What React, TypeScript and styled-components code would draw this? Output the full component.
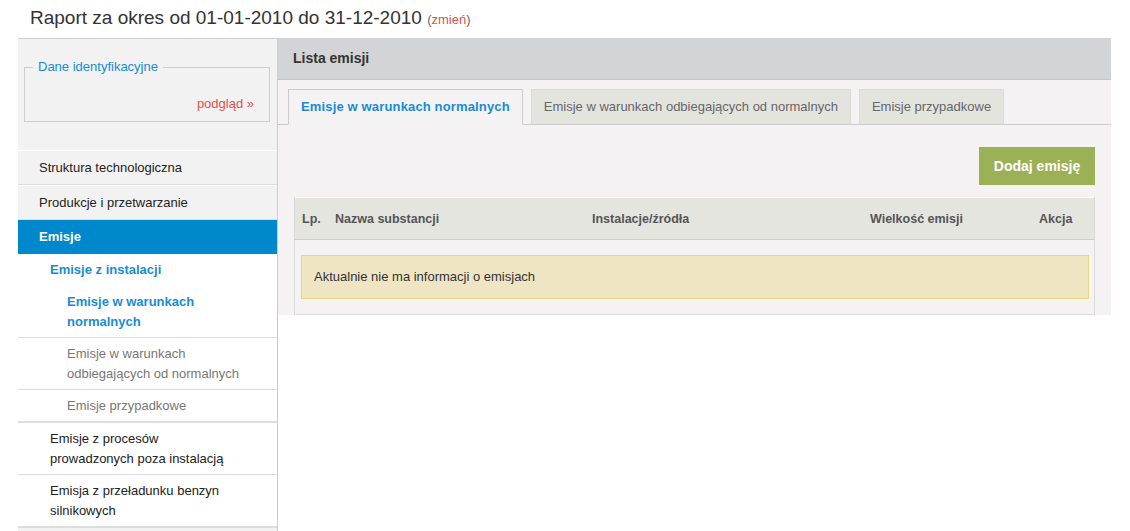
import React from 'react';
import styled, { createGlobalStyle, css } from 'styled-components';

const GlobalStyle = createGlobalStyle`
  body {
    margin: 0;
    background: #fff;
    font-family: "Liberation Sans", Arial, sans-serif;
    font-size: 13px;
    color: #222;
  }
`;

const BLUE = '#1a8bd3';
const RED = '#e0504a';

const Page = styled.div`
  width: 1130px;
`;

const Title = styled.h1`
  margin: 0;
  height: 38px;
  padding-left: 30px;
  font-size: 19px;
  font-weight: normal;
  line-height: 36px;
  color: #333;
`;

const Change = styled.span`
  font-size: 13px;
  color: #666;
`;

const ChangeLink = styled.a`
  color: ${RED};
  text-decoration: none;
`;

const Layout = styled.div`
  display: flex;
  align-items: flex-start;
  margin-left: 18px;
`;

const Sidebar = styled.aside`
  box-sizing: border-box;
  width: 260px;
  min-height: 500px;
  padding-top: 20px;
  background: #f2f2f2;
  border-top: 1px solid #ccc;
  border-right: 1px solid #ccc;
`;

const Fieldset = styled.fieldset`
  margin: 0 7px 0 6px;
  padding: 0 15px 9px 8px;
  border: 1px solid #ccc;
`;

const Legend = styled.legend`
  padding: 0 5px;
  line-height: 16px;
  color: ${BLUE};
`;

const Preview = styled.a`
  display: block;
  margin-top: 21px;
  line-height: 16px;
  text-align: right;
  color: ${RED};
  text-decoration: none;
`;

const Nav = styled.nav`
  margin-top: 28px;
`;

const NavItem = styled.a<{ $active?: boolean }>`
  display: block;
  padding-left: 21px;
  line-height: 33px;
  color: #222;
  text-decoration: none;
  border-top: 1px solid #fff;
  border-bottom: 1px solid #ddd;

  ${p =>
    p.$active &&
    css`
      line-height: 34px;
      border: none;
      background: #0088cc;
      color: #fff;
      font-weight: bold;
    `}
`;

const SubMenu = styled.div`
  background: #fff;
  border-bottom: 1px solid #ddd;
`;

const SubGroup = styled.div`
  border-bottom: 1px solid #ddd;
`;

const SubLink = styled.a<{ $current?: boolean; $level?: 2 | 3 }>`
  display: block;
  padding: 6px 34px 5px ${p => (p.$level === 3 ? 49 : 32)}px;
  line-height: 20px;
  text-decoration: none;
  color: ${p => (p.$level === 3 ? '#777' : '#222')};
  border-bottom: 1px solid #ddd;

  ${p =>
    p.$current &&
    css`
      color: ${BLUE};
      font-weight: bold;
    `}
`;

const GroupHead = styled(SubLink)`
  padding-bottom: 6px;
  border-bottom: none;
`;

const Main = styled.main`
  width: 833px;
  background: #f4f2f3;
`;

const PanelHeader = styled.h2`
  margin: 0;
  height: 41px;
  padding-left: 15px;
  background: #d3d4d6;
  border-bottom: 1px solid #c6c6c6;
  font-size: 14px;
  line-height: 41px;
  color: #333;
`;

const PanelBody = styled.div`
  padding-top: 9px;
`;

const Tabs = styled.div`
  display: flex;
  gap: 8px;
  padding: 0 10px;
  border-bottom: 1px solid #ccc;
`;

const Tab = styled.a<{ $active?: boolean }>`
  margin-bottom: -1px;
  padding: 0 12px;
  line-height: 34px;
  text-decoration: none;
  color: #666;
  background: #e4e4df;
  border: 1px solid #dcdcd6;
  border-bottom-color: #ccc;

  ${p =>
    p.$active &&
    css`
      color: ${BLUE};
      font-weight: bold;
      letter-spacing: 0.15px;
      background: #f4f2f3;
      border-color: #ccc;
      border-bottom-color: #f4f2f3;
    `}
`;

const Toolbar = styled.div`
  display: flex;
  justify-content: flex-end;
  padding: 22px 16px 12px;
`;

const AddButton = styled.button`
  width: 116px;
  height: 38px;
  border: none;
  background: #9cb155;
  color: #fff;
  font-family: inherit;
  font-size: 14px;
  font-weight: bold;
  cursor: pointer;
`;

const Table = styled.div`
  margin: 0 16px;
  border: 1px solid #dadada;
  border-top: none;
`;

const HeadRow = styled.div`
  display: grid;
  grid-template-columns: 33px 257px 278px 169px 1fr;
  height: 41px;
  padding-left: 7px;
  align-items: center;
  background: #e5e5e0;
  border-top: 1px solid #f8f8f6;
  border-bottom: 1px solid #ccc;
  font-size: 12.5px;
  font-weight: bold;
  color: #555;
`;

const TableBody = styled.div`
  padding: 15px 5px 15px 6px;
`;

const Notice = styled.div`
  padding: 11px 12px;
  line-height: 20px;
  background: #efe5c3;
  border: 1px solid #e2d87c;
  color: #333;
`;

const columns = ['Lp.', 'Nazwa substancji', 'Instalacje/źródła', 'Wielkość emisji', 'Akcja'];

const App: React.FC = () => {
  return (
    <Page>
      <GlobalStyle />
      <Title>
        Raport za okres od 01-01-2010 do 31-12-2010{' '}
        <Change>
          (<ChangeLink href="#">zmień</ChangeLink>)
        </Change>
      </Title>
      <Layout>
        <Sidebar>
          <Fieldset>
            <Legend>Dane identyfikacyjne</Legend>
            <Preview href="#">podgląd »</Preview>
          </Fieldset>
          <Nav>
            <NavItem href="#">Struktura technologiczna</NavItem>
            <NavItem href="#">Produkcje i przetwarzanie</NavItem>
            <NavItem href="#" $active>
              Emisje
            </NavItem>
            <SubMenu>
              <SubGroup>
                <GroupHead href="#" $current>
                  Emisje z instalacji
                </GroupHead>
                <SubLink href="#" $level={3} $current>
                  Emisje w warunkach normalnych
                </SubLink>
                <SubLink href="#" $level={3}>
                  Emisje w warunkach odbiegających od normalnych
                </SubLink>
                <SubLink href="#" $level={3}>
                  Emisje przypadkowe
                </SubLink>
              </SubGroup>
              <SubLink href="#">Emisje z procesów prowadzonych poza instalacją</SubLink>
              <SubLink href="#">Emisja z przeładunku benzyn silnikowych</SubLink>
            </SubMenu>
          </Nav>
        </Sidebar>
        <Main>
          <PanelHeader>Lista emisji</PanelHeader>
          <PanelBody>
            <Tabs>
              <Tab href="#" $active>
                Emisje w warunkach normalnych
              </Tab>
              <Tab href="#">Emisje w warunkach odbiegających od normalnych</Tab>
              <Tab href="#">Emisje przypadkowe</Tab>
            </Tabs>
            <Toolbar>
              <AddButton>Dodaj emisję</AddButton>
            </Toolbar>
            <Table>
              <HeadRow>
                {columns.map(c => (
                  <span key={c}>{c}</span>
                ))}
              </HeadRow>
              <TableBody>
                <Notice>Aktualnie nie ma informacji o emisjach</Notice>
              </TableBody>
            </Table>
          </PanelBody>
        </Main>
      </Layout>
    </Page>
  );
};

export default App;
